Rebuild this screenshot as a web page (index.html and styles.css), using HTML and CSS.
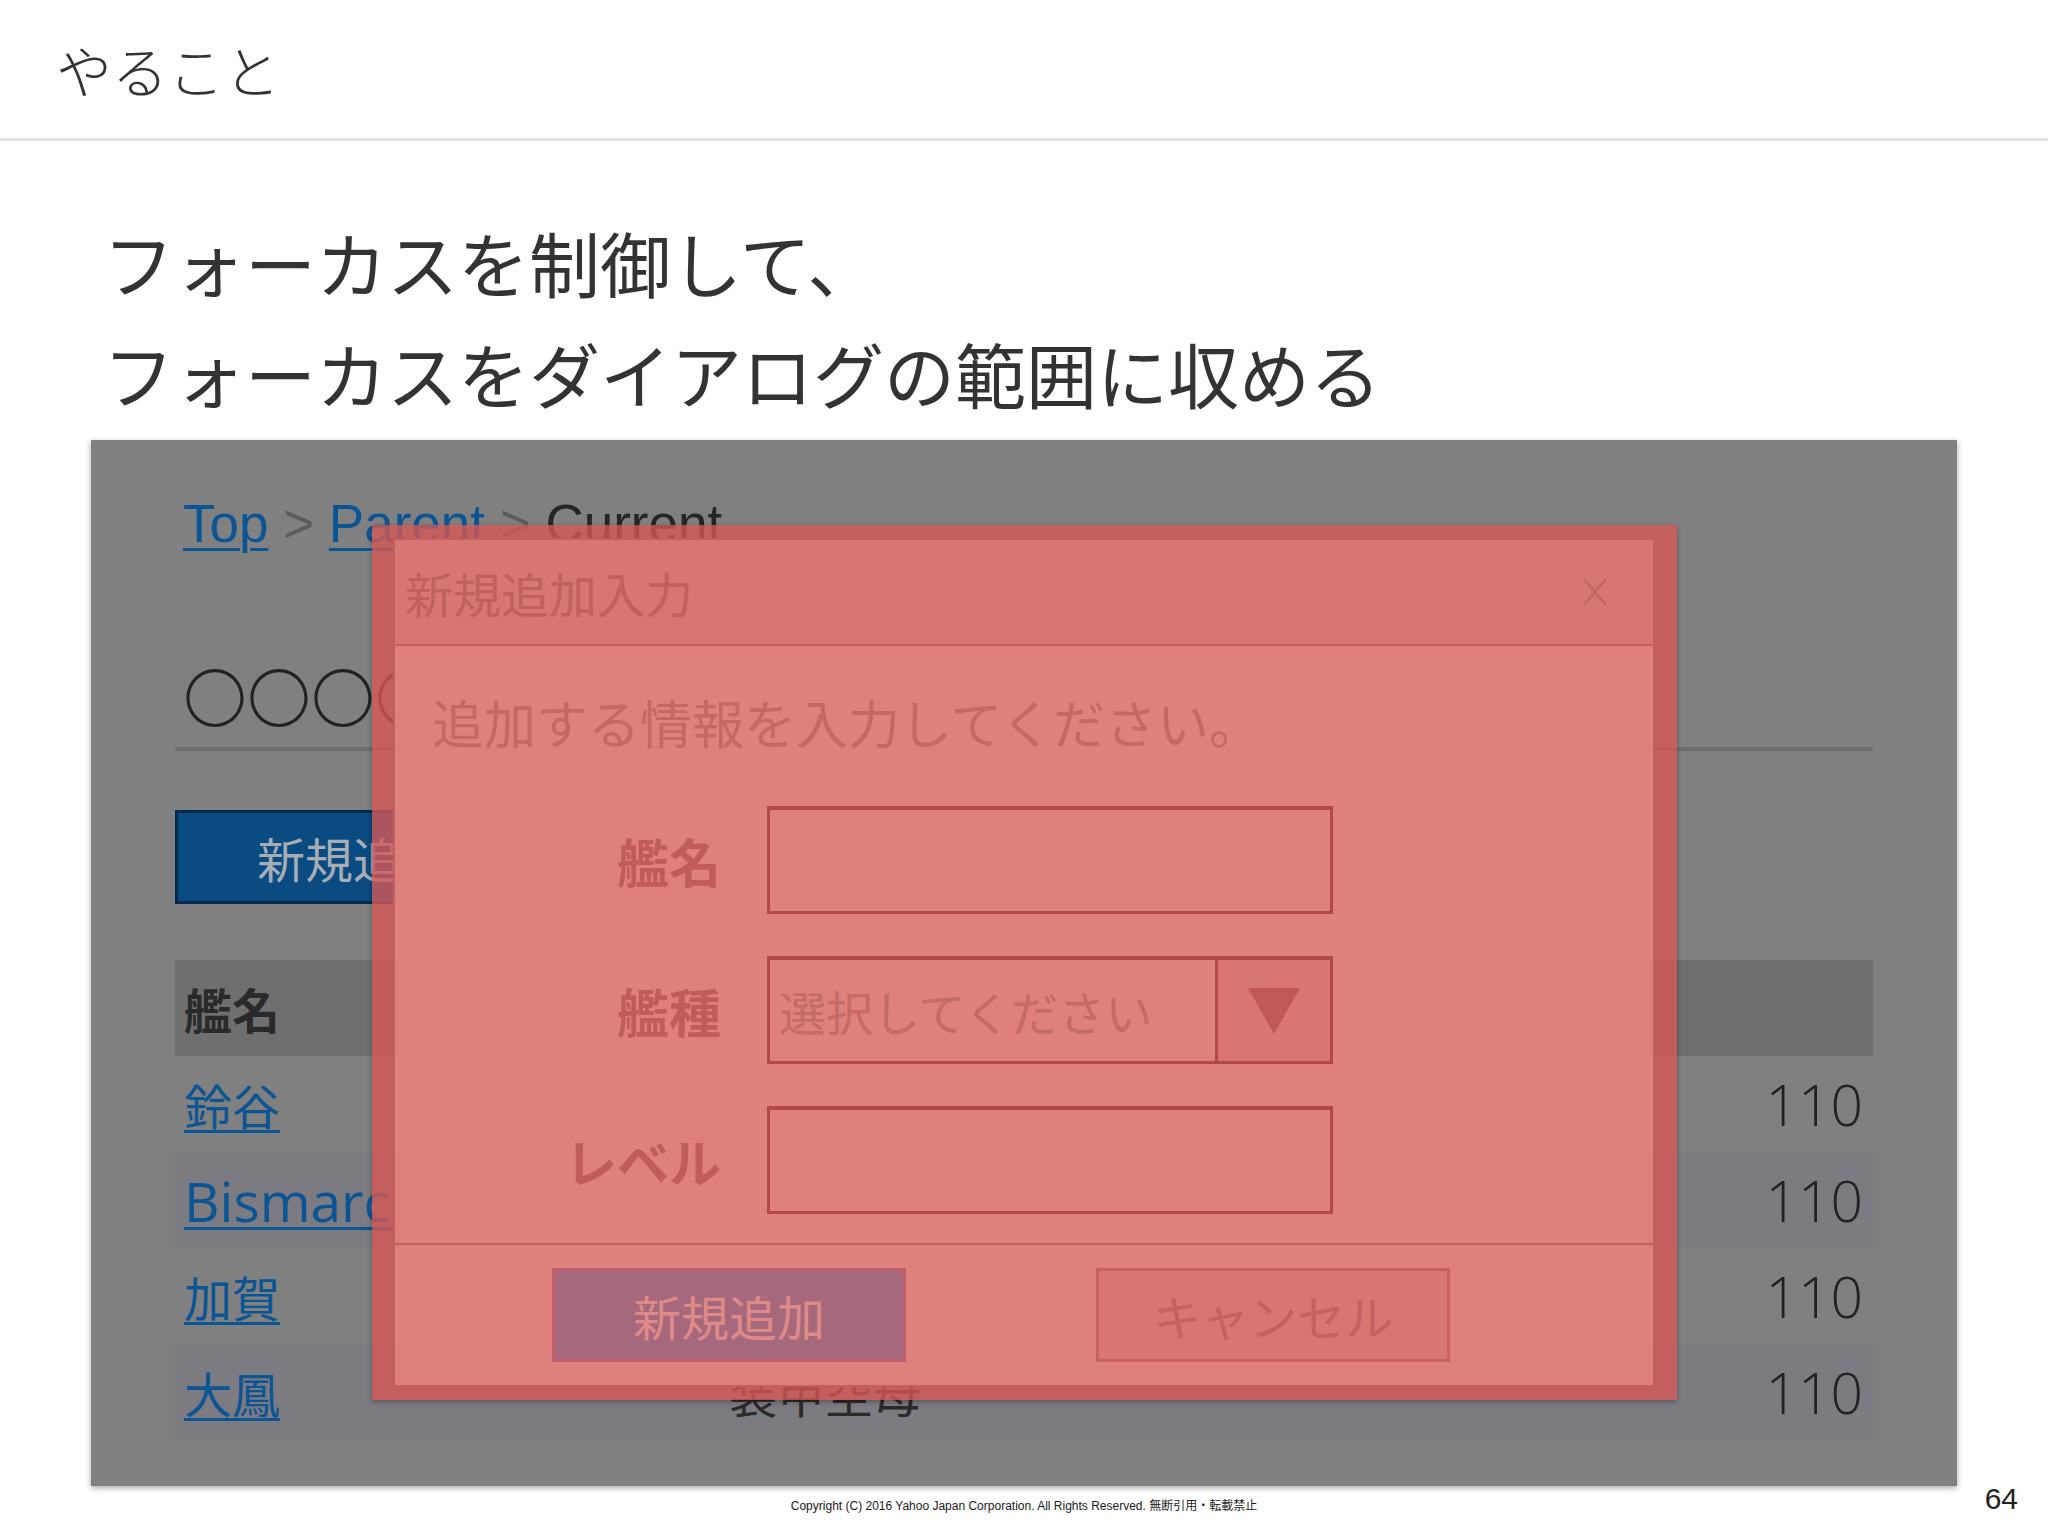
FILE: index.html
```html
<!DOCTYPE html>
<html lang="ja">
<head>
<meta charset="utf-8">
<title>やること</title>
<link rel="stylesheet" href="styles.css">
</head>
<body>
<header class="slide-header">
  <h1 class="slide-title">やること</h1>
</header>
<h2 class="lead">フォーカスを制御して、<br>フォーカスをダイアログの範囲に収める</h2>

<div class="shot">
  <div class="page">
    <nav class="crumbs"><a href="#">Top</a> &gt; <a href="#">Parent</a> &gt; <span class="cur">Current</span></nav>
    <h3 class="page-title">〇〇〇〇〇〇〇〇一覧</h3>
    <button class="add-btn" type="button">新規追加</button>
    <table class="ships">
      <thead>
        <tr><th class="col-name">艦名</th><th class="col-type">艦種</th><th>レベル</th></tr>
      </thead>
      <tbody>
        <tr><td><a href="#">鈴谷</a></td><td>航空巡洋艦</td><td class="num">110</td></tr>
        <tr><td><a href="#" class="latin">Bismarck</a></td><td>戦艦</td><td class="num">110</td></tr>
        <tr><td><a href="#">加賀</a></td><td>正規空母</td><td class="num">110</td></tr>
        <tr><td><a href="#">大鳳</a></td><td>装甲空母</td><td class="num">110</td></tr>
      </tbody>
    </table>
  </div>

  <div class="focus-ring">
    <div class="dialog">
      <div class="dlg-head">
        <h4 class="dlg-title">新規追加入力</h4>
        <span class="dlg-close"><svg width="26" height="30" viewBox="0 0 26 30"><path d="M2 2 L24 28 M24 2 L2 28" stroke="#c26663" stroke-width="2.5" fill="none"/></svg></span>
      </div>
      <div class="dlg-body">
        <p class="dlg-lead">追加する情報を入力してください。</p>
        <div class="form">
          <label class="lbl">艦名</label>
          <div class="field"></div>
          <label class="lbl">艦種</label>
          <div class="field select">
            <span class="ph">選択してください</span>
            <span class="arrow"><svg width="52" height="46" viewBox="0 0 52 46"><polygon points="0,0 52,0 26,46" fill="#bf5956"/></svg></span>
          </div>
          <label class="lbl">レベル</label>
          <div class="field"></div>
        </div>
      </div>
      <div class="dlg-foot">
        <button class="btn btn-primary" type="button">新規追加</button>
        <button class="btn btn-cancel" type="button">キャンセル</button>
      </div>
    </div>
  </div>
</div>

<footer class="slide-footer">
  <span></span>
  <small class="copyright">Copyright (C) 2016 Yahoo Japan Corporation. All Rights Reserved. 無断引用・転載禁止</small>
  <span class="pageno">64</span>
</footer>
</body>
</html>
```

FILE: styles.css
```css
* { box-sizing: border-box; }
html, body { margin: 0; padding: 0; }
body {
  width: 2048px;
  height: 1536px;
  overflow: hidden;
  background: #fff;
  font-family: "Noto Sans CJK JP", sans-serif;
  color: #333;
}

.slide-header {
  height: 141px;
  border-bottom: 3px solid #e3e3e3;
  display: flex;
  align-items: center;
  padding-left: 56px;
}
.slide-title {
  margin: 0;
  font-size: 56px;
  font-weight: 300;
  line-height: 1;
  color: #333;
}

.lead {
  margin: 65px 0 0 103px;
  font-size: 71px;
  line-height: 111px;
  font-weight: 400;
  color: #333;
  white-space: nowrap;
}

.shot {
  margin: 12px 0 0 91px;
  width: 1866px;
  height: 1046px;
  position: relative;
  background: #808080;
  box-shadow: 0 2px 6px rgba(0, 0, 0, 0.35);
  overflow: hidden;
}

.page {
  padding: 52px 84px 0;
  font-family: "Liberation Sans", "Noto Sans CJK JP", sans-serif;
}
.crumbs {
  font-size: 53px;
  line-height: 64px;
  padding-left: 8px;
  color: #5c5c5c;
  white-space: nowrap;
}
.crumbs a {
  color: #0b5595;
  text-decoration: underline;
  text-decoration-thickness: 3px;
  text-underline-offset: 6px;
}
.crumbs .cur { color: #262626; }

.page-title {
  margin: 100px 0 0;
  font-family: "Noto Sans CJK JP", sans-serif;
  font-size: 64px;
  line-height: 77px;
  font-weight: 300;
  color: #222;
  padding: 0 0 14px 8px;
  border-bottom: 4px solid #6e6e6e;
  white-space: nowrap;
  overflow: hidden;
}

.add-btn {
  display: block;
  margin-top: 59px;
  width: 356px;
  height: 94px;
  background: #0a4b82;
  border: 3px solid #022b4d;
  color: #a6adb5;
  font-family: "Noto Sans CJK JP", sans-serif;
  font-size: 48px;
  text-align: left;
  padding: 0 0 0 79px;
}

.ships {
  margin-top: 56px;
  width: 100%;
  border-collapse: collapse;
}
.ships th, .ships td {
  height: 96px;
  padding: 0 9px;
  text-align: left;
  font-family: "Noto Sans CJK JP", sans-serif;
  font-size: 48px;
  color: #2a2a2a;
  white-space: nowrap;
}
.ships th {
  background: #6f6f6f;
  font-weight: 700;
}
.ships .col-name { width: 545px; }
.ships .col-type { width: 580px; }
.ships tbody tr:nth-child(even) td { background: #7c7b81; }
.ships td a {
  color: #0b5595;
  text-decoration: underline;
  text-decoration-thickness: 3px;
  text-underline-offset: 5px;
}
.ships .latin {
  font-family: "Open Sans", "Liberation Sans", sans-serif;
  font-size: 55px;
}
.ships td.num {
  text-align: right;
  padding-right: 10px;
  font-family: "Open Sans", "Liberation Sans", sans-serif;
  font-weight: 300;
  font-size: 57px;
  letter-spacing: 0;
  color: #222;
}

/* focus highlight + dialog */
.focus-ring {
  position: absolute;
  left: 281px;
  top: 85px;
  width: 1305px;
  height: 875px;
  padding: 13px 22px 13px 21px;
  background: rgba(215, 88, 86, 0.78);
  box-shadow: 0 2px 5px rgba(0, 0, 0, 0.3);
}
.dialog {
  height: 100%;
  display: flex;
  flex-direction: column;
  background: #e0807c;
  border: 2px solid #c35f5c;
  font-family: "Noto Sans CJK JP", sans-serif;
}
.dlg-head {
  height: 106px;
  flex: none;
  display: flex;
  align-items: center;
  justify-content: space-between;
  padding: 0 45px 0 10px;
  background: #d87673;
  border-bottom: 2px solid #c25f5b;
}
.dlg-title {
  margin: 0;
  font-size: 48px;
  font-weight: 400;
  color: #c0615e;
}
.dlg-close { display: flex; }

.dlg-body {
  flex: 1;
  padding: 46px 0 0 37px;
}
.dlg-lead {
  margin: 0;
  font-size: 52px;
  line-height: 60px;
  color: #c66764;
  white-space: nowrap;
}
.form {
  margin-top: 54px;
  display: grid;
  grid-template-columns: 289px 566px;
  column-gap: 46px;
  row-gap: 42px;
  grid-auto-rows: 108px;
}
.lbl {
  justify-self: end;
  align-self: center;
  font-size: 52px;
  font-weight: 700;
  color: #c05d5b;
}
.field {
  border: 3px solid #b24848;
  border-top-width: 4px;
  background: #e0807c;
}
.select {
  display: flex;
  align-items: center;
}
.select .ph {
  flex: 1;
  padding-left: 9px;
  font-size: 47px;
  color: #c46a67;
}
.select .arrow {
  width: 115px;
  align-self: stretch;
  background: #d87673;
  border-left: 3px solid #b24848;
  display: flex;
  align-items: center;
  justify-content: center;
}

.dlg-foot {
  height: 142px;
  flex: none;
  border-top: 2px solid #c25f5b;
  padding: 23px 0 0 157px;
  display: flex;
  gap: 190px;
  align-items: flex-start;
}
.btn {
  width: 354px;
  height: 94px;
  padding: 0;
  font-family: "Noto Sans CJK JP", sans-serif;
  font-size: 48px;
}
.btn-primary {
  background: #a5687c;
  border: 3px solid #c15d6d;
  color: #e08a88;
}
.btn-cancel {
  background: #d87673;
  border: 3px solid #c8605e;
  color: #c4625f;
}

.slide-footer {
  margin-top: -12px;
  display: grid;
  grid-template-columns: 1fr auto 1fr;
  align-items: start;
}
.copyright {
  margin-top: 25px;
  font-family: "Liberation Sans", "Noto Sans CJK JP", sans-serif;
  font-size: 12px;
  line-height: 14px;
  color: #1a1a1a;
}
.pageno {
  justify-self: end;
  margin: 10px 30px 0 0;
  font-family: "Liberation Sans", sans-serif;
  font-size: 30px;
  line-height: 30px;
  color: #222;
}
```
